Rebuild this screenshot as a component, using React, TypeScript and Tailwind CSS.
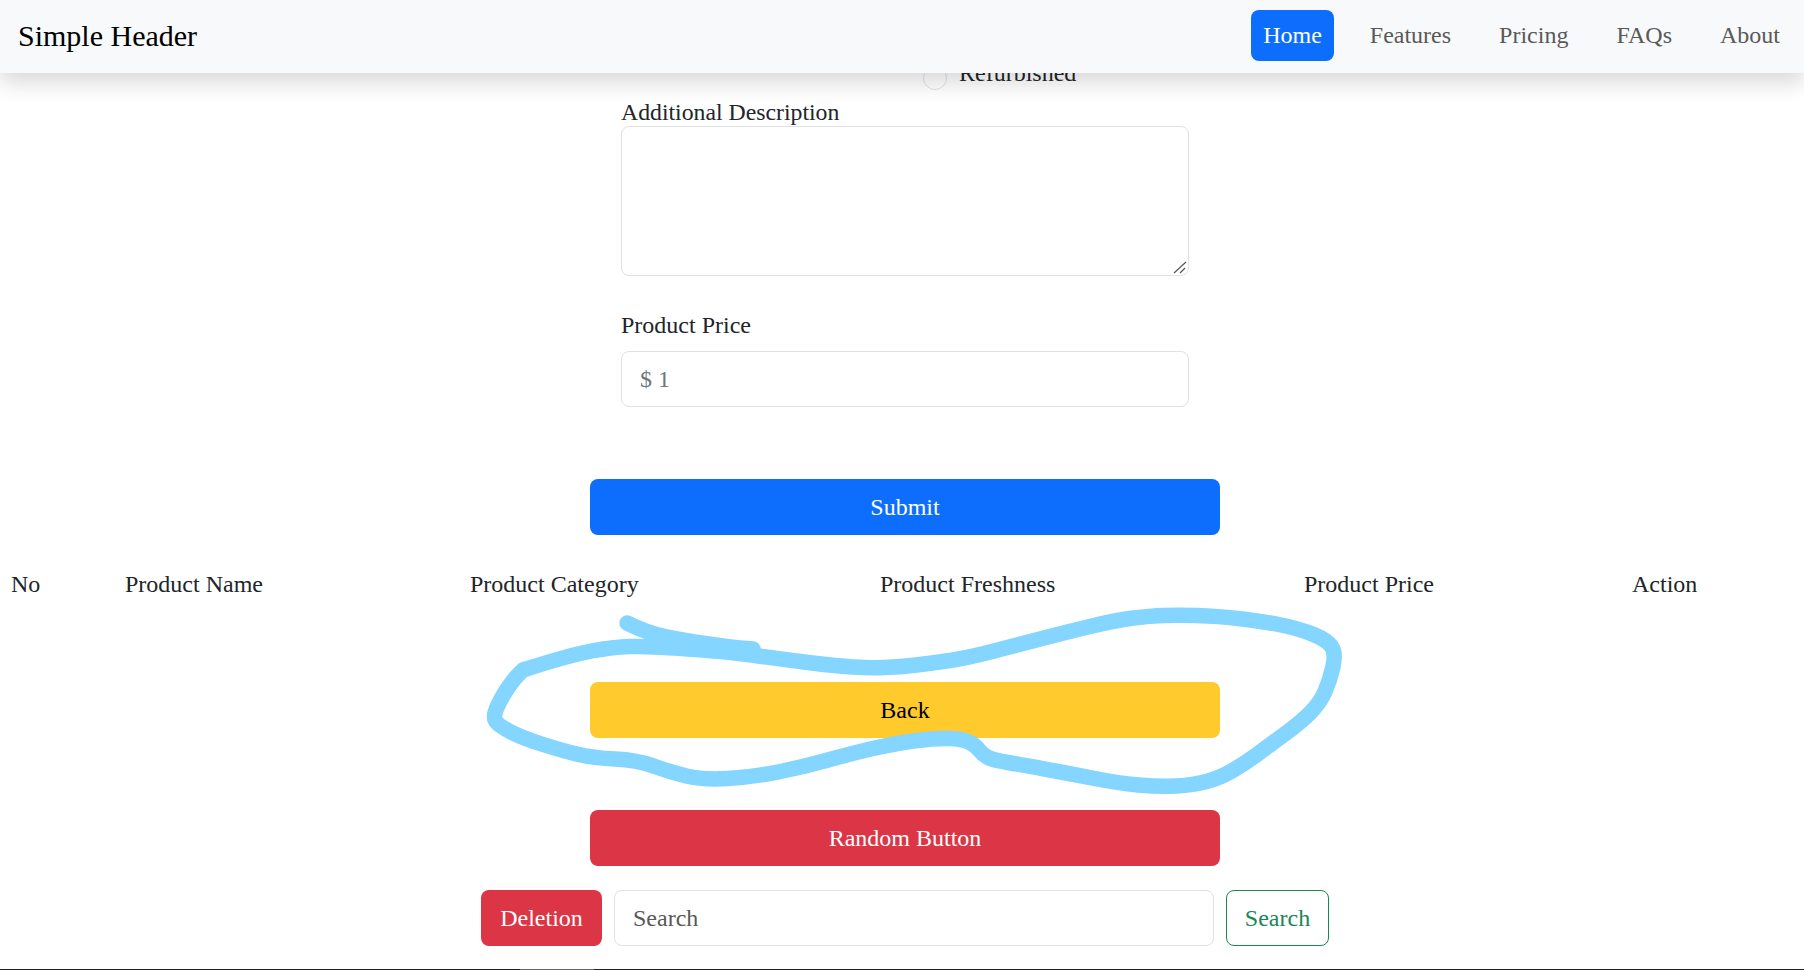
const upper: [number, number][] = [
  [523, 670], [570, 655], [613, 647], [647, 646], [703, 650], [737, 653], [787, 660], [837, 666], [870, 668],
  [900, 667], [933, 663], [967, 658], [1017, 645], [1067, 632], [1117, 620], [1150, 616], [1177, 615], [1217, 616],
  [1267, 622], [1300, 629], [1327, 640], [1336, 653], [1330, 680], [1320, 703], [1300, 723], [1267, 747], [1247, 762],
  [1220, 778], [1193, 785], [1160, 787], [1117, 783], [1067, 773], [1023, 765], [993, 760], [983, 755], [975, 745],
  [963, 739], [937, 738], [897, 743], [853, 753], [803, 767], [753, 777], [703, 780], [670, 772], [637, 760], [593, 758],
  [560, 750], [520, 737], [498, 725], [493, 717], [500, 700], [513, 680], [523, 670],
];
const tail: [number, number][] = [[627, 623], [647, 633], [683, 640], [727, 647], [753, 649]];

function smooth(points: [number, number][]) {
  let d = `M${points[0][0]} ${points[0][1]}`;
  for (let i = 1; i < points.length - 1; i++) {
    const [x, y] = points[i];
    const [nx, ny] = points[i + 1];
    d += ` Q${x} ${y} ${(x + nx) / 2} ${(y + ny) / 2}`;
  }
  const last = points[points.length - 1];
  return d + ` L${last[0]} ${last[1]}`;
}

const navLinks = ["Features", "Pricing", "FAQs", "About"];
const columns = ["No", "Product Name", "Product Category", "Product Freshness", "Product Price", "Action"];

export default function App() {
  return (
    <div className="relative h-[970px] overflow-hidden bg-white font-['Liberation_Serif',serif] text-[24px] text-[#212529]">
      <header className="relative z-10 flex h-[73px] items-center justify-between bg-[#f8f9fa] pb-[2px] pl-[18px] pr-3 shadow-[0_10px_20px_rgba(0,0,0,0.15)]">
        <span className="text-[30px] text-black">Simple Header</span>
        <nav className="flex items-center gap-6">
          <a className="flex h-[51px] items-center rounded-lg bg-[#0d6efd] px-3 pb-[2px] text-white">Home</a>
          {navLinks.map((link) => (
            <a key={link} className="px-3 pb-[2px] text-[#595959]">{link}</a>
          ))}
        </nav>
      </header>

      <main className="flex flex-col">
        <div className="ml-[590px] flex w-[630px] flex-col">
          <div className="-mt-[18px] flex h-[36px] items-center gap-[12px] pl-[333px] leading-[36px]">
            <span className="mt-[10px] h-6 w-6 rounded-full border border-[#dee2e6] bg-white" />
            <span>Refurbished</span>
          </div>
          <div className="mt-[5px] flex flex-col px-[31px]">
            <label className="pt-[2px] text-[23.75px] leading-[28px]">Additional Description</label>
            <div className="relative h-[150px]">
              <textarea className="block h-full w-full resize-none rounded-lg border border-[#dee2e6] bg-white outline-none" />
              <svg className="absolute bottom-[2px] right-[2px]" width="14" height="13" fill="none" stroke="#555555" strokeWidth="1.2">
                <path d="M1 12 L13 1" />
                <path d="M7 12 L12 7" />
              </svg>
            </div>
            <label className="mt-[34px] text-[24px] leading-[30px]">Product Price</label>
            <input
              placeholder="$ 1"
              className="mt-[11px] h-[56px] w-full rounded-lg border border-[#dee2e6] bg-white px-[18px] outline-none placeholder:text-[#6c757d]"
            />
          </div>
          <button className="mt-[72px] h-[56px] w-full rounded-lg bg-[#0d6efd] text-white">Submit</button>
        </div>

        <div className="mt-[31px] grid h-[36px] grid-cols-[114px_345px_410px_424px_328px_1fr] items-center pl-[11px] leading-[36px]">
          {columns.map((column) => (
            <span key={column}>{column}</span>
          ))}
        </div>

        <div className="ml-[590px] flex w-[630px] flex-col gap-[72px]">
          <button className="mt-[80px] h-[56px] w-full rounded-lg bg-[#ffca2c] text-black">Back</button>
          <button className="h-[56px] w-full rounded-lg bg-[#dc3545] text-white">Random Button</button>
        </div>

        <div className="ml-[481px] mt-[24px] flex h-[56px] w-[848px] gap-3">
          <button className="w-[121px] rounded-lg bg-[#dc3545] text-white">Deletion</button>
          <input
            placeholder="Search"
            className="min-w-0 flex-1 rounded-lg border border-[#dee2e6] bg-white px-[18px] outline-none placeholder:text-[#595959]"
          />
          <button className="w-[103px] rounded-lg border border-[#198754] text-[#198754]">Search</button>
        </div>

        <div className="mt-[23px] flex h-px bg-[#222222]">
          <div className="ml-[520px] w-[74px] bg-[#666666]" />
        </div>
      </main>

      <svg className="pointer-events-none absolute left-0 top-0 z-[5]" width="1804" height="970" fill="none">
        <path d={smooth(upper)} stroke="#84d5ff" strokeWidth="15.5" strokeLinecap="round" strokeLinejoin="round" />
        <path d={smooth(tail)} stroke="#84d5ff" strokeWidth="15.5" strokeLinecap="round" strokeLinejoin="round" />
      </svg>
    </div>
  );
}
